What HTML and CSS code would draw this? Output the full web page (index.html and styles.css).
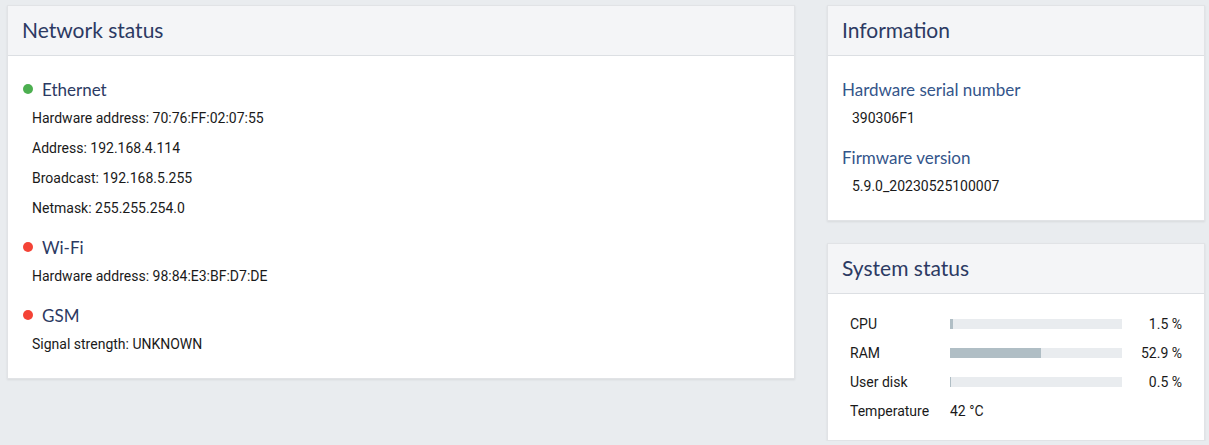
FILE: index.html
```html
<!DOCTYPE html>
<html lang="en">
<head>
    <meta charset="UTF-8">
    <title>Status</title>
    <link rel="stylesheet" href="styles.css">
</head>
<body>
    <div class="page">
        <div class="col-main">
            <div class="card">
                <div class="card-header">Network status</div>
                <div class="card-body">
                    <div class="iface">
                        <div class="iface-name"><span class="dot green"></span>Ethernet</div>
                        <div class="line">Hardware address: 70:76:FF:02:07:55</div>
                        <div class="line">Address: 192.168.4.114</div>
                        <div class="line">Broadcast: 192.168.5.255</div>
                        <div class="line">Netmask: 255.255.254.0</div>
                    </div>
                    <div class="iface">
                        <div class="iface-name"><span class="dot red"></span>Wi-Fi</div>
                        <div class="line">Hardware address: 98:84:E3:BF:D7:DE</div>
                    </div>
                    <div class="iface">
                        <div class="iface-name"><span class="dot red"></span>GSM</div>
                        <div class="line">Signal strength: UNKNOWN</div>
                    </div>
                </div>
            </div>
        </div>
        <div class="col-side">
            <div class="card">
                <div class="card-header">Information</div>
                <div class="card-body info">
                    <div class="iface">
                        <div class="iface-name">Hardware serial number</div>
                        <div class="line">390306F1</div>
                    </div>
                    <div class="iface">
                        <div class="iface-name">Firmware version</div>
                        <div class="line">5.9.0_20230525100007</div>
                    </div>
                </div>
            </div>
            <div class="card">
                <div class="card-header">System status</div>
                <div class="card-body sys">
                    <div class="sys-row">
                        <span class="sys-label">CPU</span>
                        <div class="bar"><div class="bar-fill" style="width: 1.5%"></div></div>
                        <span class="sys-value">1.5 %</span>
                    </div>
                    <div class="sys-row">
                        <span class="sys-label">RAM</span>
                        <div class="bar"><div class="bar-fill" style="width: 52.9%"></div></div>
                        <span class="sys-value">52.9 %</span>
                    </div>
                    <div class="sys-row">
                        <span class="sys-label">User disk</span>
                        <div class="bar"><div class="bar-fill" style="width: 0.5%"></div></div>
                        <span class="sys-value">0.5 %</span>
                    </div>
                    <div class="sys-row">
                        <span class="sys-label">Temperature</span>
                        <span>42 °C</span>
                    </div>
                </div>
            </div>
        </div>
    </div>
</body>
</html>
```

FILE: styles.css
```css
* {
    margin: 0;
    padding: 0;
    box-sizing: border-box;
}

body {
    background-color: #e9ecef;
    font-family: Roboto, 'Liberation Sans', Arial, sans-serif;
    font-size: 14px;
    color: #1a1a1a;
}

.page {
    display: flex;
    gap: 32px;
    padding: 5px 4px 0 7px;
}

.col-main {
    width: 788px;
}

.col-side {
    width: 378px;
    display: flex;
    flex-direction: column;
    gap: 22px;
}

.card {
    background: white;
    border: 1px solid #e1e3e6;
    box-shadow: 0 1px 2px rgba(0,0,0,0.08);
}

.card-header {
    background-color: #f4f5f7;
    border-bottom: 1px solid #dcdfe3;
    height: 50px;
    line-height: 48px;
    padding-left: 14px;
    font-family: Lato, 'Open Sans', sans-serif;
    font-size: 21px;
    color: #2c3a63;
}

.card-body {
    padding: 23px 14px 19px;
}

.iface {
    margin-bottom: 14px;
}

.iface:last-child {
    margin-bottom: 0;
}

.iface-name {
    display: flex;
    align-items: center;
    font-family: Lato, 'Open Sans', sans-serif;
    font-size: 17px;
    color: #2c3a63;
    height: 20px;
    margin-bottom: 4px;
}

.info .iface-name {
    color: #34558a;
}

.dot {
    width: 10px;
    height: 10px;
    border-radius: 50%;
    margin: 0 9px 0 1px;
}

.dot.green {
    background-color: #4caf50;
}

.dot.red {
    background-color: #f44336;
}

.line {
    padding-left: 10px;
    line-height: 30px;
}

.sys {
    padding: 15px 22px 15px;
}

.sys-row {
    display: flex;
    align-items: center;
    height: 29px;
}

.sys-label {
    width: 100px;
}

.bar {
    width: 172px;
    height: 10px;
    background-color: #e9ecef;
}

.bar-fill {
    height: 100%;
    min-width: 1px;
    background-color: #b0bec5;
}

.sys-value {
    flex: 1;
    text-align: right;
}
```
